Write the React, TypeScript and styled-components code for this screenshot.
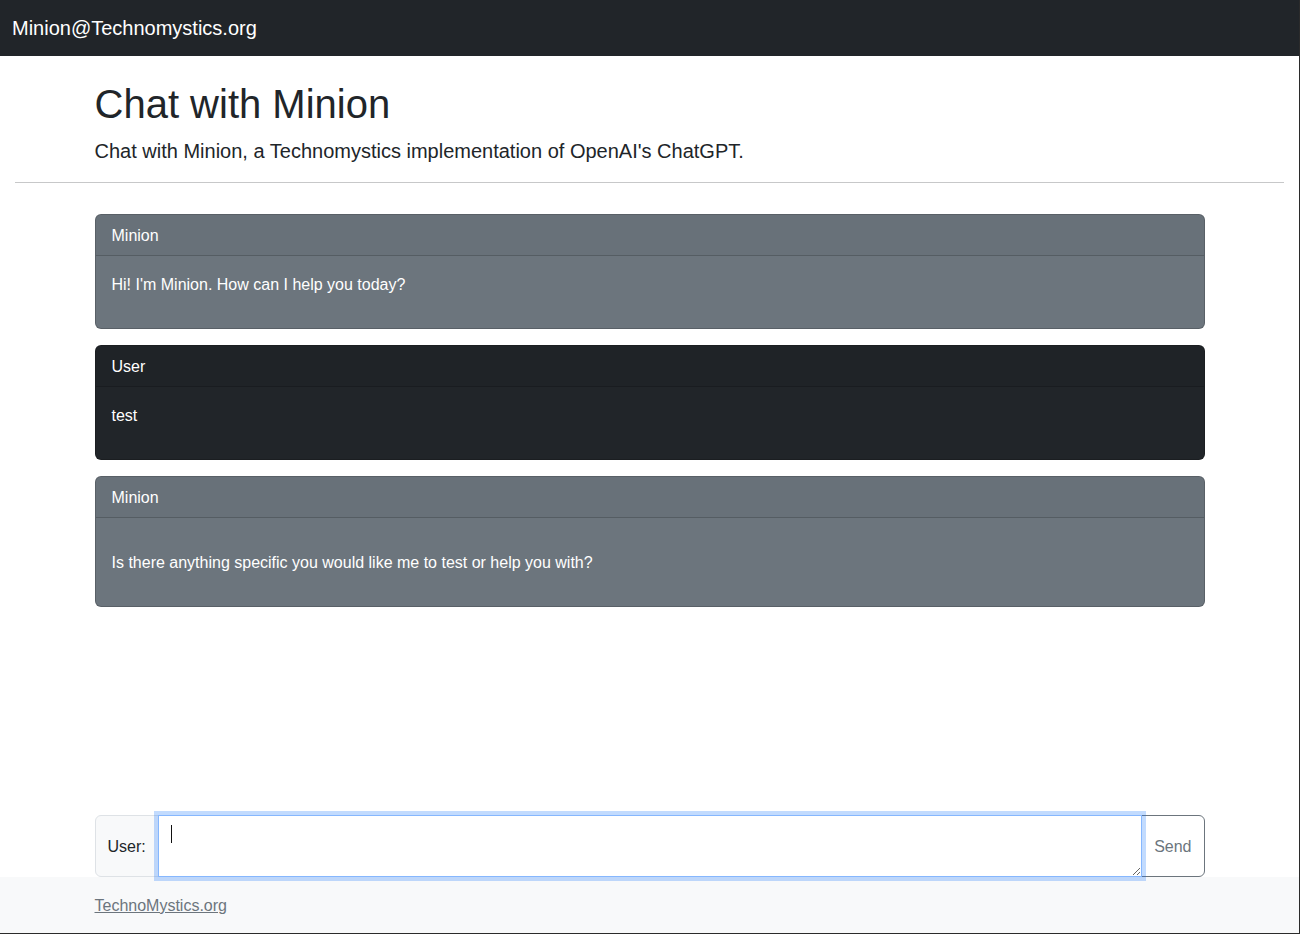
import React from "react";
import styled, { createGlobalStyle } from "styled-components";

const Global = createGlobalStyle`
  *, *::before, *::after { box-sizing: border-box; }
  html, body { margin: 0; padding: 0; }
  body {
    font-family: "Liberation Sans", Arial, sans-serif;
    font-size: 16px;
    line-height: 1.5;
    color: #212529;
    background: #fff;
  }
`;

const Page = styled.div`
  min-height: 100vh;
  display: flex;
  flex-direction: column;
  border-right: 1px solid #2b2b2b;
  border-bottom: 1px solid #2b2b2b;
`;

const Navbar = styled.nav`
  background: #212529;
  padding: 8px 12px;
  display: flex;
  align-items: center;
`;

const Brand = styled.a`
  color: #fff;
  font-size: 20px;
  line-height: 30px;
  padding: 5px 0;
  text-decoration: none;
`;

const Container = styled.div`
  width: 1140px;
  max-width: 100%;
  margin: 0 auto;
  padding: 0 15px;
`;

const Header = styled(Container)`
  padding-top: 24px;
`;

const Title = styled.h1`
  margin: 0 0 8px;
  font-size: 40px;
  font-weight: 500;
  line-height: 1.2;
`;

const Lead = styled.p`
  margin: 0 0 16px;
  font-size: 20px;
  font-weight: 300;
  line-height: 1.5;
`;

const Rule = styled.hr`
  margin: 0 15px;
  border: 0;
  border-top: 1px solid #212529;
  opacity: 0.25;
`;

const Messages = styled(Container)`
  flex: 1;
  padding-top: 31px;
  display: flex;
  flex-direction: column;
  gap: 16px;
`;

const Card = styled.div<{ $variant: "secondary" | "dark" }>`
  background: ${(p) => (p.$variant === "dark" ? "#212529" : "#6c757d")};
  color: #fff;
  border: 1px solid rgba(0, 0, 0, 0.175);
  border-radius: 6px;
  overflow: hidden;
`;

const CardHeader = styled.div`
  padding: 9px 16px 7px;
  background: rgba(0, 0, 0, 0.03);
  border-bottom: 1px solid rgba(0, 0, 0, 0.175);
`;

const CardBody = styled.div`
  padding: 17px 16px 15px;
`;

const Para = styled.p`
  margin: 0 0 16px;
`;

const InputRow = styled(Container)`
  display: flex;
  align-items: stretch;
`;

const InputGroup = styled.div`
  display: flex;
  width: 100%;
  position: relative;
`;

const GroupText = styled.span`
  display: flex;
  align-items: center;
  padding: 7px 12px 5px;
  background: #f8f9fa;
  border: 1px solid #dee2e6;
  border-radius: 6px 0 0 6px;
  color: #212529;
  white-space: nowrap;
`;

const TextArea = styled.textarea`
  flex: 1 1 auto;
  position: relative;
  z-index: 5;
  margin-left: -1px;
  min-width: 0;
  padding: 6px 12px;
  font-family: inherit;
  font-size: 16px;
  line-height: 24px;
  color: #212529;
  background: #fff;
  border: 1px solid #86b7fe;
  border-radius: 0;
  box-shadow: 0 0 0 4px rgba(13, 110, 253, 0.25);
  outline: none;
  resize: vertical;
`;

const Caret = styled.span`
  position: absolute;
  z-index: 6;
  left: 76px;
  top: 10px;
  width: 1px;
  height: 18px;
  background: #111;
  pointer-events: none;
`;

const SendButton = styled.button`
  margin-left: -1px;
  padding: 7px 12px 5px;
  font-family: inherit;
  font-size: 16px;
  line-height: 24px;
  color: #6c757d;
  background: transparent;
  border: 1px solid #6c757d;
  border-radius: 0 6px 6px 0;
  cursor: pointer;
`;

const Footer = styled.footer`
  background: #f8f9fa;
  padding: 17px 0 15px;
`;

const FooterLink = styled.a`
  color: #6c757d;
  text-decoration: underline;
  line-height: 24px;
`;

type Msg = { who: string; variant: "secondary" | "dark"; lines: string[] };

const messages: Msg[] = [
  { who: "Minion", variant: "secondary", lines: ["Hi! I'm Minion. How can I help you today?"] },
  { who: "User", variant: "dark", lines: ["test"] },
  {
    who: "Minion",
    variant: "secondary",
    lines: ["", "Is there anything specific you would like me to test or help you with?"],
  },
];

export default function App() {
  return (
    <>
      <Global />
      <Page>
        <Navbar>
          <Brand href="#">Minion@Technomystics.org</Brand>
        </Navbar>
        <Header>
          <Title>Chat with Minion</Title>
          <Lead>Chat with Minion, a Technomystics implementation of OpenAI's ChatGPT.</Lead>
        </Header>
        <Rule />
        <Messages>
          {messages.map((m, i) => (
            <Card key={i} $variant={m.variant}>
              <CardHeader>{m.who}</CardHeader>
              <CardBody>
                {m.lines.map((l, j) => (
                  <Para key={j}>{l}</Para>
                ))}
              </CardBody>
            </Card>
          ))}
        </Messages>
        <InputRow>
          <InputGroup>
            <GroupText>User:</GroupText>
            <TextArea rows={2} autoFocus />
            <Caret />
            <SendButton type="button">Send</SendButton>
          </InputGroup>
        </InputRow>
        <Footer>
          <Container>
            <FooterLink href="#">TechnoMystics.org</FooterLink>
          </Container>
        </Footer>
      </Page>
    </>
  );
}
